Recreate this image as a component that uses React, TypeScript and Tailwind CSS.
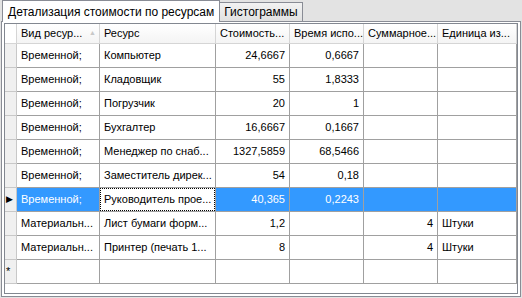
const rows: string[][] = [
  ["Временной;", "Компьютер", "24,6667", "0,6667", "", ""],
  ["Временной;", "Кладовщик", "55", "1,8333", "", ""],
  ["Временной;", "Погрузчик", "20", "1", "", ""],
  ["Временной;", "Бухгалтер", "16,6667", "0,1667", "", ""],
  ["Временной;", "Менеджер по снаб...", "1327,5859", "68,5466", "", ""],
  ["Временной;", "Заместитель дирек...", "54", "0,18", "", ""],
  ["Временной;", "Руководитель прое...", "40,365", "0,2243", "", ""],
  ["Материальн...", "Лист бумаги форм...", "1,2", "", "4", "Штуки"],
  ["Материальн...", "Принтер (печать 1...", "8", "", "4", "Штуки"],
];

const headers = ["Вид ресур...", "Ресурс", "Стоимость...", "Время испо...", "Суммарное...", "Единица из..."];
const rightAligned = [false, false, true, true, true, false];
const SELECTED = 6;

const App = () => {
  return (
    <div
      className="w-[522px] h-[298px] bg-[#e3e3e3] flex flex-col text-[11px] text-black overflow-hidden"
      style={{ fontFamily: '"Liberation Sans", Arial, sans-serif' }}
    >
      {/* Tabs */}
      <div className="h-[21px] flex items-end pl-[2px] shrink-0 text-[12px]">
        <div className="relative z-10 h-[22px] -mb-px px-[5px] bg-white border border-b-0 border-[#898c95] flex items-center whitespace-nowrap">
          Детализация стоимости по ресурсам
        </div>
        <div className="h-[19px] px-[4px] bg-linear-to-b from-[#f2f2f2] to-[#e1e1e1] border border-b-0 border-l-0 border-[#898c95] flex items-center whitespace-nowrap">
          Гистограммы
        </div>
      </div>

      {/* Tab panel */}
      <div className="ml-px w-[520px] h-[276px] bg-white border border-[#898c95] pt-px px-[2px] pb-[2px]">
        <div className="h-full border border-[#828790] bg-white">
          <div className="grid grid-cols-[12px_83px_116px_74px_74px_74px_79px]">
            {/* Header */}
            <div className="h-[20px] bg-white border-r border-b border-[#d5d5d5]" />
            {headers.map((h, i) => (
              <div
                key={h}
                className="h-[20px] bg-linear-to-b from-white to-[#f4f4f4] border-r border-b border-[#d5d5d5] flex items-center pl-[4px] pr-[3px] whitespace-nowrap overflow-hidden"
              >
                <span className="flex-1">{h}</span>
                {i === 0 && <span className="text-[7px] text-[#c8c8c8]">▲</span>}
              </div>
            ))}

            {/* Rows */}
            {rows.map((r, ri) => {
              const sel = ri === SELECTED;
              return [
                <div
                  key={`h${ri}`}
                  className="h-[24px] bg-[#f0f0f0] border-r border-b border-[#c8c8c8] flex items-center pl-px"
                >
                  {sel && <span className="text-[9px] leading-none">▶</span>}
                </div>,
                ...r.map((c, ci) => {
                  const focus = sel && ci === 1;
                  const blue = sel && !focus;
                  return (
                    <div
                      key={`${ri}-${ci}`}
                      className={`h-[24px] border-r border-b border-[#a0a0a0] whitespace-nowrap overflow-hidden ${blue ? "bg-[#3399ff] text-white" : "bg-white"}`}
                    >
                      <div
                        className={`h-full flex items-center px-[3px] ${rightAligned[ci] ? "justify-end" : ""} ${focus ? "border border-dotted border-black" : "border border-transparent"}`}
                      >
                        {c}
                      </div>
                    </div>
                  );
                }),
              ];
            })}

            {/* New row */}
            <div className="h-[24px] bg-[#f0f0f0] border-r border-b border-[#c8c8c8] flex items-center pl-px">
              <span className="text-[11px] leading-none">*</span>
            </div>
            {headers.map((h) => (
              <div key={`n${h}`} className="h-[24px] bg-white border-r border-b border-[#a0a0a0]" />
            ))}
          </div>
        </div>
      </div>
    </div>
  );
};

export default App;
